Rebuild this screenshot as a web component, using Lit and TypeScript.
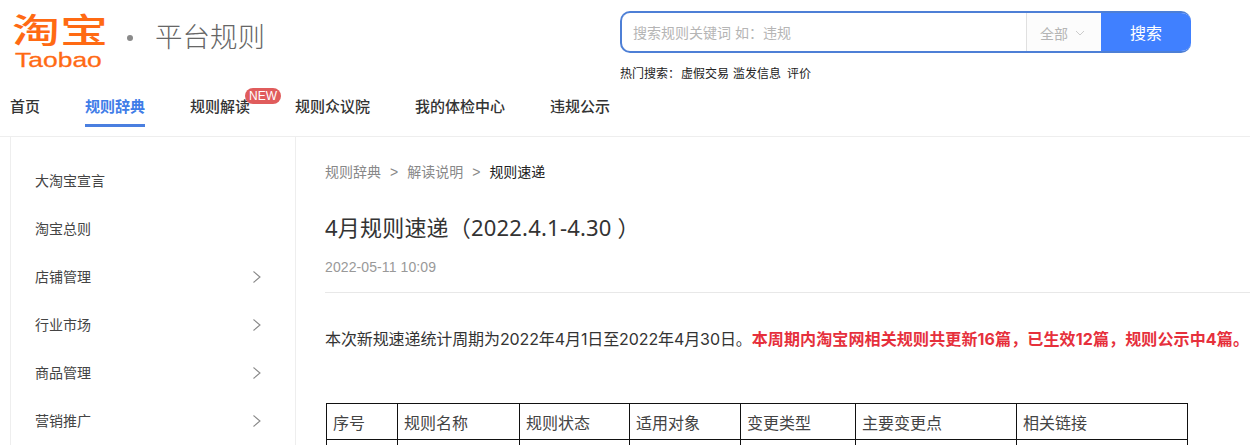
import { LitElement, html, css } from "lit";
import { customElement } from "lit/decorators.js";

const NAV = ["首页", "规则辞典", "规则解读", "规则众议院", "我的体检中心", "违规公示"];
const SIDE: [string, boolean][] = [
  ["大淘宝宣言", false],
  ["淘宝总则", false],
  ["店铺管理", true],
  ["行业市场", true],
  ["商品管理", true],
  ["营销推广", true],
];
const COLS = ["序号", "规则名称", "规则状态", "适用对象", "变更类型", "主要变更点", "相关链接"];
const WIDTHS = [71, 122, 110, 111, 115, 161, 171];

@customElement("app-root")
export class AppRoot extends LitElement {
  static styles = css`
    :host {
      display: block;
      width: 1250px;
      height: 445px;
      overflow: hidden;
      background: #fff;
      font-family: "Liberation Sans", "Noto Sans CJK SC", sans-serif;
      color: #333;
    }
    .top {
      display: flex;
      height: 88px;
    }
    .logo {
      width: 122px;
      padding: 9px 0 0 12px;
      box-sizing: border-box;
      color: #ff6a13;
      line-height: 1;
    }
    .logo-cn {
      font-family: "Noto Sans CJK SC", sans-serif;
      font-size: 34px;
      font-weight: 500;
      line-height: 40px;
      height: 41px;
      white-space: nowrap;
      transform: scaleX(1.41);
      transform-origin: left center;
    }
    .logo-en {
      margin: 0 0 0 3px;
      font-size: 21px;
      line-height: 20px;
      white-space: nowrap;
      transform: scaleX(1.26);
      transform-origin: left center;
      -webkit-text-stroke: 0.3px #ff6a13;
    }
    .dot {
      width: 6px;
      height: 6px;
      border-radius: 50%;
      background: #8a8a8a;
      margin: 35px 0 0 5px;
    }
    .brand {
      margin: 13px 0 0 22px;
      width: 465px;
      font-family: "Noto Sans CJK SC", sans-serif;
      font-weight: 300;
      font-size: 27.5px;
      line-height: 44px;
      color: #666;
      white-space: nowrap;
    }
    .search-wrap {
      padding-top: 11px;
    }
    .search {
      box-sizing: border-box;
      width: 571px;
      height: 42px;
      display: flex;
      border: 2px solid #4d7fd6;
      border-right: 0;
      border-radius: 10px;
      overflow: hidden;
    }
    .ph {
      flex: 1;
      padding-left: 11px;
      font-size: 14px;
      line-height: 40px;
      color: #b5b5b5;
    }
    .sel {
      box-sizing: border-box;
      width: 75px;
      border-left: 1px solid #e0e0e0;
      background: #fcfcfc;
      display: flex;
      align-items: center;
      padding: 1px 0 0 13px;
      gap: 7px;
      font-size: 14px;
      color: #b5b5b5;
    }
    .btn {
      width: 90px;
      margin: -2px 0;
      background: #4080ff;
      color: #fff;
      font-size: 16px;
      display: flex;
      align-items: center;
      justify-content: center;
    }
    .hot {
      display: flex;
      margin-top: 13px;
      font-size: 12px;
      line-height: 16px;
      color: #222;
    }
    .hot .label {
      width: 61px;
    }
    .hot .term {
      margin-right: 4px;
    }
    .hot .term + .term + .term {
      margin-left: 2px;
    }
    nav {
      box-sizing: border-box;
      display: flex;
      gap: 45px;
      height: 49px;
      padding-left: 10px;
      border-bottom: 1px solid #eee;
    }
    .nav-item {
      position: relative;
      box-sizing: border-box;
      height: 39px;
      font-size: 15px;
      font-weight: 500;
      line-height: 36px;
      color: #333;
      font-family: "Noto Sans CJK SC", sans-serif;
      white-space: nowrap;
    }
    .nav-item.on {
      color: #3f7de8;
      font-weight: 700;
      border-bottom: 3px solid #4a7fe0;
    }
    .badge {
      position: absolute;
      left: 55px;
      top: 0;
      width: 36px;
      height: 16px;
      border-radius: 8px;
      background: #e05c5c;
      color: #fff;
      font-family: "Liberation Sans", sans-serif;
      font-size: 12px;
      font-weight: 400;
      line-height: 16px;
      text-align: center;
    }
    .body {
      display: flex;
    }
    aside {
      box-sizing: border-box;
      width: 286px;
      height: 308px;
      margin-left: 10px;
      padding-top: 19px;
      border-left: 1px solid #eee;
      border-right: 1px solid #eee;
    }
    .side-item {
      box-sizing: border-box;
      height: 48px;
      display: flex;
      align-items: center;
      justify-content: space-between;
      padding: 0 33px 0 24px;
      font-size: 14px;
      color: #444;
    }
    .side-item svg {
      display: block;
      margin-top: 2px;
    }
    main {
      flex: 1;
      min-width: 0;
      padding: 24px 0 0 29px;
    }
    .crumb {
      display: flex;
      gap: 9px;
      font-size: 14px;
      line-height: 22px;
      color: #888;
    }
    .crumb .cur {
      color: #222;
    }
    h1 {
      margin: 28px 0 0;
      font-family: "Noto Sans", "Noto Sans CJK SC", sans-serif;
      font-size: 22px;
      font-weight: 400;
      letter-spacing: 0.2px;
      line-height: 32px;
      color: #333;
      white-space: nowrap;
    }
    .date {
      margin-top: 14px;
      font-size: 14px;
      letter-spacing: 0.1px;
      line-height: 20px;
      color: #999;
    }
    hr {
      margin: 15px 0 0;
      border: 0;
      border-top: 1px solid #e8e8e8;
    }
    p {
      margin: 34px 0 0;
      font-family: Inter, "Noto Sans CJK SC", sans-serif;
      font-size: 16px;
      letter-spacing: -0.1px;
      line-height: 24px;
      color: #333;
      white-space: nowrap;
    }
    p b {
      color: #e6303c;
      font-weight: 700;
      letter-spacing: 0.13px;
    }
    table {
      margin: 52px 0 0 1px;
      border-collapse: collapse;
      table-layout: fixed;
      width: 861px;
    }
    td {
      box-sizing: border-box;
      border: 1px solid #111;
      height: 36px;
      padding: 1px 6px 0;
      font-size: 16px;
      color: #444;
      white-space: nowrap;
    }
  `;

  private chevron() {
    return html`<svg width="10" height="14" viewBox="0 0 10 14" fill="none" stroke="#888" stroke-width="1.1"><path d="M1.5 1.5 L8 7 L1.5 12.5"/></svg>`;
  }

  render() {
    return html`
      <div class="top">
        <div class="logo">
          <div class="logo-cn">淘宝</div>
          <div class="logo-en">Taobao</div>
        </div>
        <div class="dot"></div>
        <div class="brand">平台规则</div>
        <div class="search-wrap">
          <div class="search">
            <div class="ph">搜索规则关键词 如：违规</div>
            <div class="sel">
              全部
              <svg width="10" height="6" viewBox="0 0 10 6" fill="none" stroke="#ccc"><path d="M1 1 L5 5 L9 1"/></svg>
            </div>
            <div class="btn">搜索</div>
          </div>
          <div class="hot">
            <span class="label">热门搜索：</span><span class="term">虚假交易</span><span class="term">滥发信息</span><span class="term">评价</span>
          </div>
        </div>
      </div>
      <nav>
        ${NAV.map(
          (n, i) => html`<div class="nav-item ${i === 1 ? "on" : ""}">
            ${n}${i === 2 ? html`<span class="badge">NEW</span>` : ""}
          </div>`
        )}
      </nav>
      <div class="body">
        <aside>
          ${SIDE.map(
            ([t, c]) => html`<div class="side-item"><span>${t}</span>${c ? this.chevron() : ""}</div>`
          )}
        </aside>
        <main>
          <div class="crumb">
            <span>规则辞典</span><span>&gt;</span><span>解读说明</span><span>&gt;</span><span class="cur">规则速递</span>
          </div>
          <h1>4月规则速递（2022.4.1-4.30 ）</h1>
          <div class="date">2022-05-11 10:09</div>
          <hr />
          <p>本次新规速递统计周期为2022年4月1日至2022年4月30日。<b>本周期内淘宝网相关规则共更新16篇，已生效12篇，规则公示中4篇。</b></p>
          <table>
            <colgroup>${WIDTHS.map((w) => html`<col style="width:${w}px" />`)}</colgroup>
            <tr>${COLS.map((c) => html`<td>${c}</td>`)}</tr>
            <tr>${COLS.map(() => html`<td></td>`)}</tr>
          </table>
        </main>
      </div>
    `;
  }
}
